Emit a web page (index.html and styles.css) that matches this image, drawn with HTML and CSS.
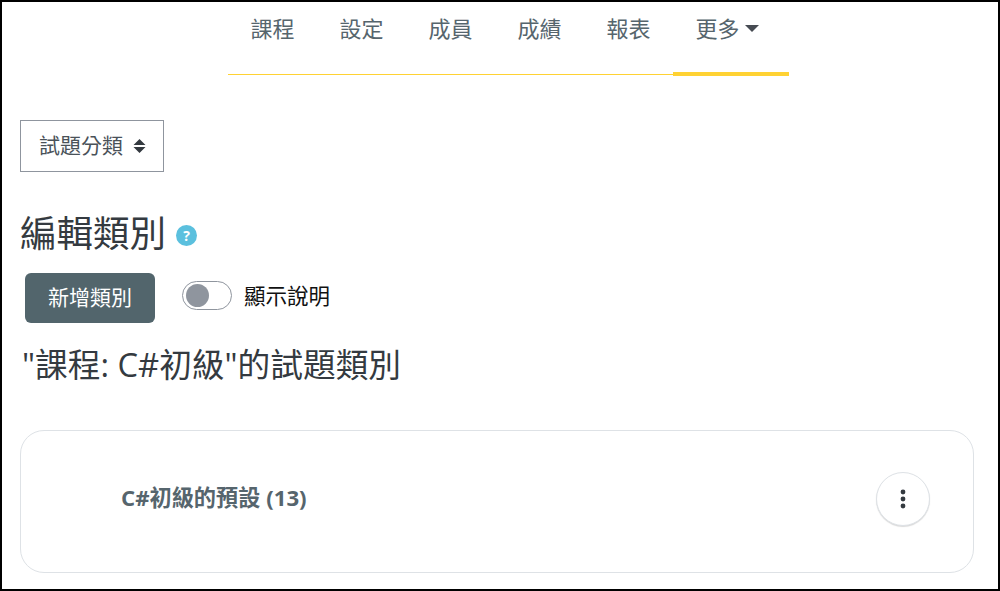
FILE: index.html
```html
<!DOCTYPE html>
<html>
<head>
	<meta charset="utf-8">
	<title>編輯類別</title>
	<link rel="stylesheet" href="styles.css">
</head>
<body>

<div class="page">
    <nav class="tabs">
        <a class="tab" href="#">課程</a>
        <a class="tab" href="#">設定</a>
        <a class="tab" href="#">成員</a>
        <a class="tab" href="#">成績</a>
        <a class="tab" href="#">報表</a>
        <a class="tab active" href="#">更多<span class="caret"></span></a>
    </nav>

    <div class="content">
        <button class="select-btn" type="button">
            <span class="select-text">試題分類</span>
            <svg class="sort-icon" width="13" height="16" viewBox="0 0 13 16"><path d="M6.5 1l6 6H.5zM6.5 15l-6-6h12z" fill="#343a40"/></svg>
        </button>

        <div class="title-row">
            <h2 class="page-title">編輯類別</h2>
            <span class="help-icon">?</span>
        </div>

        <div class="action-row">
            <button class="add-btn" type="button">新增類別</button>
            <span class="switch"><span class="knob"></span></span>
            <span class="switch-label">顯示說明</span>
        </div>

        <h3 class="sub-title">"課程: C#初級"的試題類別</h3>

        <div class="card">
            <a class="card-name" href="#">C#初級的預設 (13)</a>
            <button class="menu-btn" type="button">
                <svg width="6" height="20" viewBox="0 0 6 20"><circle cx="3" cy="3" r="2.4" fill="#343a40"/><circle cx="3" cy="10" r="2.4" fill="#343a40"/><circle cx="3" cy="17" r="2.4" fill="#343a40"/></svg>
            </button>
        </div>
    </div>
</div>

</body>
</html>
```

FILE: styles.css
```css
* {
    box-sizing: border-box;
}

body {
    margin: 0;
    font-family: "Open Sans", "Noto Sans CJK TC", sans-serif;
    color: #343a40;
    background-color: #fff;
}

.page {
    height: 591px;
    overflow: hidden;
    border: 2px solid #000;
}

.tabs {
    display: flex;
    width: 561px;
    height: 73px;
    margin-left: 226px;
    border-bottom: 1px solid #ffd233;
}

.tab {
    height: 73px;
    padding: 10px 22.5px 0 22.5px;
    font-size: 22px;
    line-height: 32px;
    color: #56656d;
    text-decoration: none;
}

.tab.active {
    width: 116px;
    height: 74px;
    border-bottom: 4px solid #ffd233;
    white-space: nowrap;
}

.caret {
    display: inline-block;
    margin-left: 5px;
    vertical-align: 5px;
    border-top: 7px solid #464b52;
    border-left: 7px solid transparent;
    border-right: 7px solid transparent;
}

.content {
    padding: 45px 24px 0 18px;
}

.select-btn {
    display: flex;
    align-items: center;
    gap: 10px;
    height: 52px;
    padding: 0 17px 0 18px;
    font: inherit;
    font-size: 21px;
    color: #4a5259;
    background: #fff;
    border: 1px solid #8f959e;
}

.select-text {
    margin-bottom: 4px;
}

.title-row {
    display: flex;
    align-items: center;
    gap: 10px;
    margin-top: 35px;
}

.page-title {
    margin: 0;
    font-size: 36.5px;
    font-weight: 400;
    line-height: 52px;
}

.help-icon {
    width: 21px;
    height: 21px;
    margin-top: 4px;
    font-size: 14px;
    font-weight: 700;
    line-height: 21px;
    text-align: center;
    color: #fff;
    background-color: #5bc0de;
    border-radius: 50%;
}

.action-row {
    display: flex;
    align-items: center;
    margin-top: 14px;
    margin-left: 5px;
}

.add-btn {
    width: 130px;
    height: 50px;
    padding: 0 0 4px;
    font: inherit;
    font-size: 21px;
    color: #fff;
    background-color: #52656c;
    border: none;
    border-radius: 6px;
}

.switch {
    display: block;
    width: 50px;
    height: 29px;
    margin: 0 0 6px 27px;
    padding: 2px 3px;
    border: 1px solid #8f959e;
    border-radius: 15px;
}

.knob {
    display: block;
    width: 23px;
    height: 23px;
    background-color: #8f959e;
    border-radius: 50%;
}

.switch-label {
    margin: 0 0 8px 12px;
    font-size: 21.5px;
    color: #111;
}

.sub-title {
    margin: 20px 0 0 2px;
    font-size: 32.7px;
    font-weight: 400;
    line-height: 44px;
}

.card {
    display: flex;
    align-items: center;
    justify-content: space-between;
    height: 143px;
    margin-top: 43px;
    padding: 0 43px 6px 100px;
    border: 1px solid #dee2e6;
    border-radius: 24px;
}

.card-name {
    margin-bottom: 4px;
    font-size: 22.2px;
    font-weight: 700;
    color: #56656d;
    text-decoration: none;
}

.menu-btn {
    display: flex;
    align-items: center;
    justify-content: center;
    width: 54px;
    height: 54px;
    padding: 0;
    background: #fff;
    border: 1px solid #dee2e6;
    border-radius: 50%;
    box-shadow: 0 1px 1px rgba(0, 0, 0, 0.15);
}
```
